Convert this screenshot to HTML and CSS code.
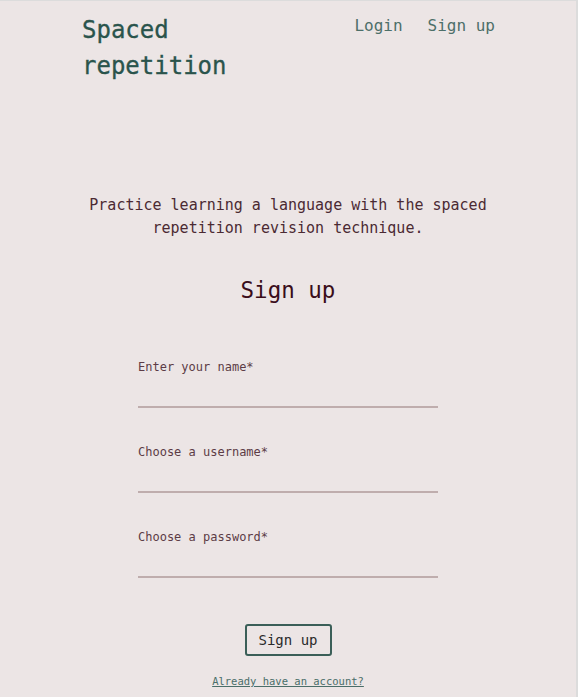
FILE: index.html
```html
<!DOCTYPE html>
<html lang="en">
<head>
<meta charset="utf-8">
<title>Spaced repetition</title>
<link rel="stylesheet" href="styles.css">
</head>
<body>
<div class="frame">
  <header class="header">
    <h1 class="logo">Spaced<br>repetition</h1>
    <nav class="nav">
      <a href="#" class="nav-link">Login</a>
      <a href="#" class="nav-link">Sign up</a>
    </nav>
  </header>
  <main class="main">
    <p class="intro">Practice learning a language with the spaced repetition revision technique.</p>
    <h2 class="title">Sign up</h2>
    <form class="form">
      <label class="field">
        <span class="label">Enter your name*</span>
        <input class="input" type="text">
      </label>
      <label class="field">
        <span class="label">Choose a username*</span>
        <input class="input" type="text">
      </label>
      <label class="field">
        <span class="label">Choose a password*</span>
        <input class="input" type="password">
      </label>
      <button class="btn" type="button">Sign up</button>
      <a href="#" class="alt-link">Already have an account?</a>
    </form>
  </main>
</div>
</body>
</html>
```
FILE: styles.css
```css
* { box-sizing: border-box; }
html, body { margin: 0; padding: 0; }
body {
  background: #ece5e5;
  font-family: "DejaVu Sans Mono", "Liberation Mono", monospace;
}
.frame {
  min-height: 697px;
  border-top: 1px solid #dcdcdc;
  border-right: 2px solid #dcdcdc;
}
.header {
  width: 414px;
  margin: 0 auto;
  display: flex;
  justify-content: space-between;
  align-items: flex-start;
  padding-top: 11px;
  padding-left: 1px;
}
.logo {
  margin: 0;
  font-size: 24px;
  line-height: 36px;
  font-weight: normal;
  color: #2a544c;
  -webkit-text-stroke: 0.3px #2a544c;
}
.nav {
  display: flex;
  gap: 25px;
  padding-top: 2px;
}
.nav-link {
  color: #4d6f69;
  text-decoration: none;
  font-size: 16px;
  line-height: 24px;
}
.main {
  display: flex;
  flex-direction: column;
  align-items: center;
  padding-top: 110px;
}
.intro {
  margin: 0;
  width: 410px;
  text-align: center;
  font-size: 15px;
  line-height: 23px;
  color: #4b2a33;
}
.title {
  margin: 35px 0 0;
  font-size: 22.5px;
  line-height: 30px;
  font-weight: normal;
  color: #3a0d1a;
}
.form {
  display: flex;
  flex-direction: column;
  align-items: center;
  margin-top: 54px;
}
.field {
  display: flex;
  flex-direction: column;
  width: 300px;
  margin-bottom: 36px;
}
.label {
  font-size: 12px;
  line-height: 16px;
  color: #5c3c46;
}
.input {
  margin-top: 7px;
  height: 26px;
  border: 0;
  border-bottom: 2px solid #bfadad;
  background: transparent;
  outline: none;
  font-family: inherit;
  font-size: 14px;
}
.btn {
  margin-top: 10px;
  width: 87px;
  height: 32px;
  background: transparent;
  border: 2px solid #3b5f58;
  border-radius: 3px;
  font-family: inherit;
  font-size: 14px;
  color: #2a2a2a;
  padding: 0;
}
.alt-link {
  margin-top: 19px;
  font-size: 10.5px;
  color: #4a6e69;
  text-decoration: underline;
}
```
